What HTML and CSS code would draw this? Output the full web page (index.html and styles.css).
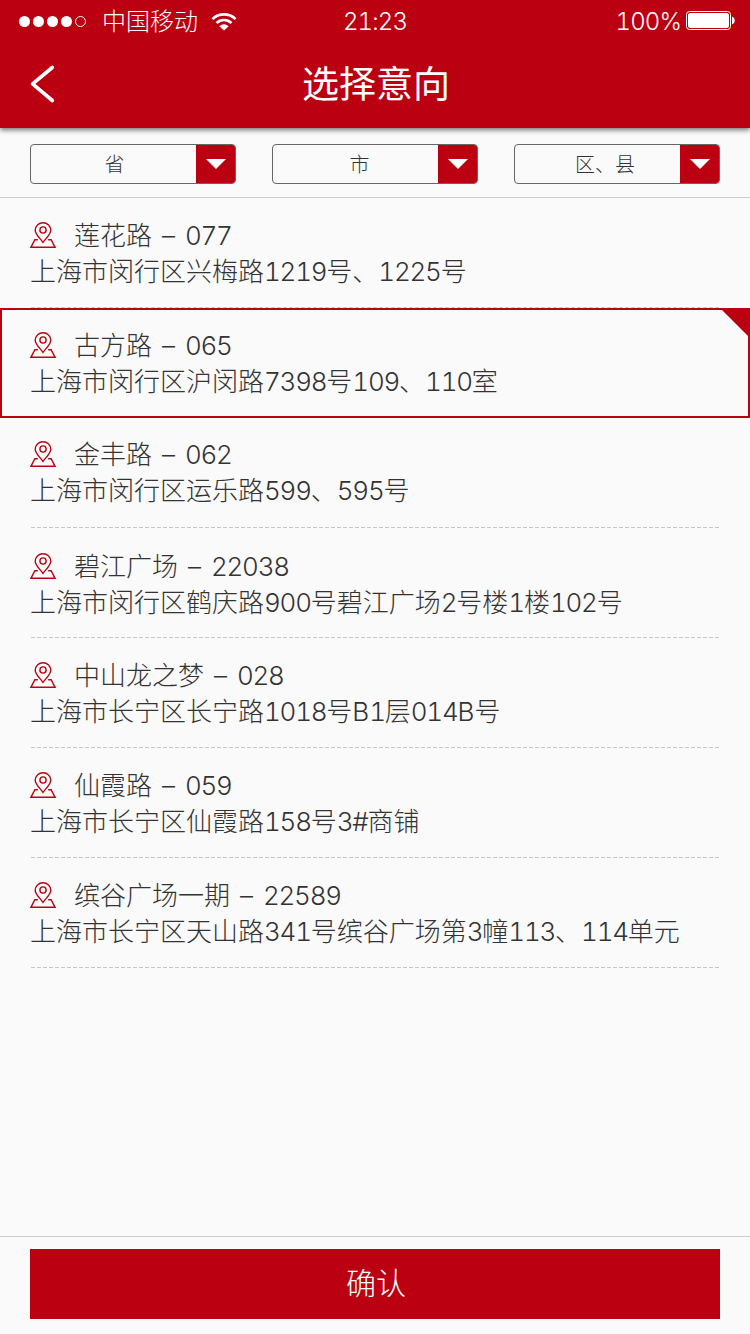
FILE: index.html
```
<!DOCTYPE html>
<html lang="zh-CN">
    <head>
        <meta charset="utf-8" />
        <meta name="viewport" content="width=750" />
        <title>选择意向</title>
        <link rel="stylesheet" href="styles.css">
    </head>
    <body>
        <svg class="sprite" width="0" height="0">
            <symbol id="icon-pin" viewBox="0 0 26 26">
                <path d="M13 20.4C10.6 16.8 5.2 12.4 5.2 8.2a7.8 7.5 0 0 1 15.6 0C20.8 12.4 15.400 16.8 13 20.4z" />
                <circle cx="13" cy="8" r="3.1" />
                <path d="M7.800 17.700H4.900L.9 25.300H25.100L21.100 17.700H18.200" />
            </symbol>
        </svg>

        <div class="page">
            <header class="header">
                <div class="status-bar">
                    <div class="status-left">
                        <div class="signal">
                            <i></i><i></i><i></i><i></i><i class="empty"></i>
                        </div>
                        <span class="carrier">中国移动</span>
                        <svg class="wifi" width="26" height="19" viewBox="0 0 26 19">
                            <path d="M1.400 7.100a16.600 16.600 0 0 1 23.200 0" />
                            <path d="M5.500 11a10.800 10.800 0 0 1 15 0" />
                            <path class="dot" d="M8.300 14.300Q13 10.200 17.700 14.300L13 18.600z" />
                        </svg>
                    </div>
                    <span class="time">21:23</span>
                    <div class="status-right">
                        <span class="percent">100%</span>
                        <svg class="battery" width="49" height="20" viewBox="0 0 49 20">
                            <rect class="shell" x=".5" y=".5" width="44" height="18" rx="3" />
                            <rect x="2" y="2" width="41" height="15" rx="2.500" />
                            <path d="M46 5.500q2.800 1.200 2.800 4t-2.800 4z" />
                        </svg>
                    </div>
                </div>
                <div class="nav-bar">
                    <a href="#" class="btn-back">
                        <svg width="26" height="40" viewBox="0 0 26 40">
                            <path d="M22.300 3.500L2.600 19.900L22.300 36.500" />
                        </svg>
                    </a>
                    <h1 class="title">选择意向</h1>
                </div>
            </header>

            <div class="filter">
                <div class="select"><span>省</span><b class="arrow"></b></div>
                <div class="select city"><span>市</span><b class="arrow"></b></div>
                <div class="select area"><span>区、县</span><b class="arrow"></b></div>
            </div>

            <ul class="store-list">
                <li class="store">
                    <p class="name"><svg class="pin"><use href="#icon-pin" /></svg><span>莲花路 – <i>077</i></span></p>
                    <p class="addr">上海市闵行区兴梅路<i>1219</i>号、<i>1225</i>号</p>
                </li>
                <li class="store active">
                    <p class="name"><svg class="pin"><use href="#icon-pin" /></svg><span>古方路 – <i>065</i></span></p>
                    <p class="addr">上海市闵行区沪闵路<i>7398</i>号<i>109</i>、<i>110</i>室</p>
                </li>
                <li class="store">
                    <p class="name"><svg class="pin"><use href="#icon-pin" /></svg><span>金丰路 – <i>062</i></span></p>
                    <p class="addr">上海市闵行区运乐路<i>599</i>、<i>595</i>号</p>
                </li>
                <li class="store">
                    <p class="name"><svg class="pin"><use href="#icon-pin" /></svg><span>碧江广场 – <i>22038</i></span></p>
                    <p class="addr">上海市闵行区鹤庆路<i>900</i>号碧江广场<i>2</i>号楼<i>1</i>楼<i>102</i>号</p>
                </li>
                <li class="store">
                    <p class="name"><svg class="pin"><use href="#icon-pin" /></svg><span>中山龙之梦 – <i>028</i></span></p>
                    <p class="addr">上海市长宁区长宁路<i>1018</i>号B<i>1</i>层<i>014</i>B号</p>
                </li>
                <li class="store">
                    <p class="name"><svg class="pin"><use href="#icon-pin" /></svg><span>仙霞路 – <i>059</i></span></p>
                    <p class="addr">上海市长宁区仙霞路<i>158</i>号<i>3#</i>商铺</p>
                </li>
                <li class="store">
                    <p class="name"><svg class="pin"><use href="#icon-pin" /></svg><span>缤谷广场一期 – <i>22589</i></span></p>
                    <p class="addr">上海市长宁区天山路<i>341</i>号缤谷广场第<i>3</i>幢<i>113</i>、<i>114</i>单元</p>
                </li>
            </ul>

            <footer class="footer">
                <button type="button" class="btn-confirm">确认</button>
            </footer>
        </div>
    </body>
</html>
```
FILE: styles.css
```
* {
    margin: 0;
    padding: 0;
    box-sizing: border-box;
}

body {
    background: #fafafa;
    color: #333;
    font-family: Inter, "Noto Sans CJK SC", sans-serif;
    font-weight: 300;
    font-variant-numeric: tabular-nums;
}

.sprite {
    display: block;
}

.page {
    display: flex;
    flex-direction: column;
    width: 750px;
    height: 1334px;
    overflow: hidden;
}

/* header */
.header {
    height: 128px;
    background: #bb0011;
    color: #fff;
    box-shadow: 0 2px 5px rgba(0, 0, 0, 0.55);
}

.status-bar {
    display: grid;
    grid-template-columns: 1fr auto 1fr;
    align-items: center;
    height: 42px;
    padding: 0 15px 0 19px;
    font-size: 24px;
    line-height: 42px;
}

.status-left,
.status-right {
    display: flex;
    align-items: center;
}

.status-right {
    justify-content: flex-end;
    gap: 5px;
}

.signal {
    display: flex;
    gap: 3px;
    margin-right: 16px;
}

.signal i {
    width: 11px;
    height: 11px;
    border-radius: 50%;
    background: #fff;
}

.signal .empty {
    border: 1px solid #fff;
    background: none;
}

.carrier {
    margin-right: 13px;
    padding-top: 2px;
    line-height: 40px;
}

.time,
.percent {
    padding-top: 2px;
    line-height: 40px;
    letter-spacing: -0.9px;
}

.time {
    margin-right: 4px;
}

.wifi path {
    fill: none;
    stroke: #fff;
    stroke-width: 2.6;
}

.wifi .dot {
    fill: #fff;
    stroke: none;
}

.battery {
    fill: #fff;
}

.battery .shell {
    fill: none;
    stroke: #fff;
}

.nav-bar {
    display: grid;
    grid-template-columns: 60px 1fr 60px;
    align-items: center;
    height: 84px;
    padding: 0 15px;
}

.btn-back {
    display: flex;
    padding-left: 15px;
}

.btn-back path {
    fill: none;
    stroke: #fff;
    stroke-width: 3.6;
    stroke-linecap: round;
    stroke-linejoin: round;
}

.title {
    padding: 2px 0 0 2px;
    font-size: 37px;
    font-weight: 400;
    line-height: 82px;
    text-align: center;
}

/* filter */
.filter {
    display: flex;
    gap: 36px;
    height: 70px;
    padding: 16px 30px 13px;
    border-bottom: 1px solid #ccc;
}

.select {
    display: flex;
    flex: 1;
    height: 40px;
    border: 1px solid #666;
    border-radius: 4px;
    overflow: hidden;
    font-size: 20px;
    line-height: 40px;
    text-align: center;
}

.select span {
    flex: 1;
    padding-left: 2px;
}

.select.city span {
    padding-left: 8px;
}

.select.area span {
    padding-left: 15px;
}

.arrow {
    display: flex;
    align-items: center;
    justify-content: center;
    width: 39px;
    height: 38px;
    background: #bb0011;
}

.arrow::after {
    content: "";
    border: 10px solid transparent;
    border-top-color: #fff;
    border-bottom: 0;
}

/* store list */
.store-list {
    flex: 1;
    list-style: none;
}

.store {
    position: relative;
    height: 110px;
    padding: 20px 30px 0;
    font-size: 26px;
    line-height: 36px;
    white-space: nowrap;
}

.store::after {
    content: "";
    position: absolute;
    left: 31px;
    right: 31px;
    bottom: 0;
    height: 1px;
    background: repeating-linear-gradient(90deg, #c8c8c8 0 4px, transparent 4px 6px);
}

.store:nth-child(3) {
    padding-top: 19px;
}

.store:nth-child(4) {
    padding-top: 21px;
}

.store.active {
    padding: 18px 28px 0;
    border: 2px solid #bb0011;
}

.store.active::after {
    top: 0;
    left: auto;
    right: 0;
    width: 26px;
    height: 26px;
    background: #bb0011;
    clip-path: polygon(0 0, 100% 0, 100% 100%);
}

/* keep the digits as tight as the characters around them */
.store i {
    font-style: normal;
    letter-spacing: -1.25px;
}

.name {
    display: flex;
    align-items: center;
    word-spacing: 3px;
}

.pin {
    width: 26px;
    height: 26px;
    margin: 0 18px 2px 0;
    fill: none;
    stroke: #bb0011;
    stroke-width: 1.4;
}

/* footer */
.footer {
    height: 98px;
    padding: 12px 30px 0;
    border-top: 1px solid #ccc;
}

.btn-confirm {
    display: block;
    width: 100%;
    height: 70px;
    padding: 0 0 7px 2px;
    border: 0;
    background: #bb0011;
    color: #fff;
    font: inherit;
    font-size: 30px;
}
```
